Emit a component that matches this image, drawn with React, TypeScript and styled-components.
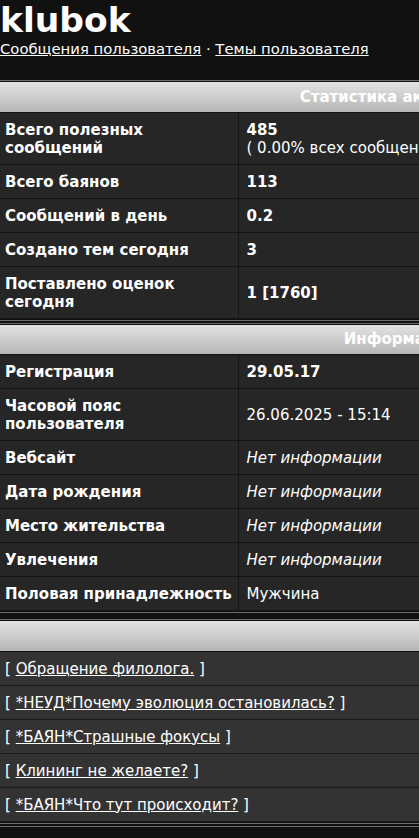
import React from "react";
import styled, { createGlobalStyle } from "styled-components";

const GlobalStyle = createGlobalStyle`
  html, body {
    margin: 0;
    padding: 0;
    background: #111111;
    overflow-x: hidden;
  }
  body {
    font-family: "DejaVu Sans", Verdana, sans-serif;
    color: #ffffff;
  }
`;

const Page = styled.div`
  width: 800px;
  background: #111111;
`;

const Top = styled.header`
  padding: 0 0 22px 0;
`;

const Title = styled.h1`
  margin: 0;
  font-size: 34.5px;
  line-height: 40px;
  font-weight: bold;
  color: #ffffff;
`;

const NavLine = styled.div`
  font-size: 14.8px;
  line-height: 18px;
  color: #ffffff;
`;

const NavLink = styled.a`
  color: #ffffff;
  text-decoration: underline;
`;

const Section = styled.section<{ $gap?: number }>`
  margin-top: ${(p) => p.$gap ?? 0}px;
  border-top: 1px solid #6c6c6c;
  border-bottom: 1px solid #6c6c6c;
  padding: 1px 0;
  background: #111111;
`;

const Table = styled.table`
  width: 100%;
  border-collapse: collapse;
  table-layout: fixed;
`;

const HeadCell = styled.th`
  height: 30px;
  padding: 0;
  box-sizing: border-box;
  background: linear-gradient(#e3e3e3, #b6b6b6);
  color: #ffffff;
  font-size: 15px;
  font-weight: bold;
  text-align: center;
  border-bottom: 1px solid #111111;
  vertical-align: middle;
`;

const Row = styled.tr<{ $light?: boolean }>`
  background: ${(p) => (p.$light ? "#333333" : "#262626")};
`;

const LabelCell = styled.td`
  padding: 8px 4px 7px 5px;
  font-size: 15px;
  line-height: 18px;
  font-weight: bold;
  border-bottom: 1px solid #141414;
  vertical-align: middle;
  white-space: normal;
`;

const ValueCell = styled.td<{ $bold?: boolean; $italic?: boolean }>`
  padding: 8px 8px 7px 8px;
  font-size: 15px;
  line-height: 18px;
  font-weight: ${(p) => (p.$bold ? "bold" : "normal")};
  font-style: ${(p) => (p.$italic ? "italic" : "normal")};
  border-bottom: 1px solid #141414;
  border-left: 1px solid #141414;
  vertical-align: middle;
  white-space: nowrap;
`;

const Sub = styled.span`
  display: block;
  font-weight: normal;
`;

const TopicCell = styled.td`
  padding: 8px 5px 7px 5px;
  font-size: 15px;
  line-height: 18px;
  border-bottom: 1px solid #1a1a1a;
  white-space: nowrap;
`;

const TopicLink = styled.a`
  color: #ffffff;
  text-decoration: underline;
`;

const Tail = styled.div`
  margin-top: 2px;
  border-top: 1px solid #6c6c6c;
  height: 14px;
  background: #111111;
`;

type Item = { label: string; value: React.ReactNode; bold?: boolean; italic?: boolean };

const stats: Item[] = [
  {
    label: "Всего полезных сообщений",
    value: (
      <>
        485
        <Sub>( 0.00% всех сообщений )</Sub>
      </>
    ),
    bold: true,
  },
  { label: "Всего баянов", value: "113", bold: true },
  { label: "Сообщений в день", value: "0.2", bold: true },
  { label: "Создано тем сегодня", value: "3", bold: true },
  { label: "Поставлено оценок сегодня", value: "1 [1760]", bold: true },
];

const info: Item[] = [
  { label: "Регистрация", value: "29.05.17", bold: true },
  { label: "Часовой пояс пользователя", value: "26.06.2025 - 15:14" },
  { label: "Вебсайт", value: "Нет информации", italic: true },
  { label: "Дата рождения", value: "Нет информации", italic: true },
  { label: "Место жительства", value: "Нет информации", italic: true },
  { label: "Увлечения", value: "Нет информации", italic: true },
  { label: "Половая принадлежность", value: "Мужчина" },
];

const topics = [
  "Обращение филолога.",
  "*НЕУД*Почему эволюция остановилась?",
  "*БАЯН*Страшные фокусы",
  "Клининг не желаете?",
  "*БАЯН*Что тут происходит?",
];

function InfoTable({ title, items }: { title: string; items: Item[] }) {
  return (
    <Table>
      <colgroup>
        <col style={{ width: 238 }} />
        <col />
      </colgroup>
      <thead>
        <tr>
          <HeadCell colSpan={2}>{title}</HeadCell>
        </tr>
      </thead>
      <tbody>
        {items.map((it) => (
          <Row key={it.label}>
            <LabelCell>{it.label}</LabelCell>
            <ValueCell $bold={it.bold} $italic={it.italic}>
              {it.value}
            </ValueCell>
          </Row>
        ))}
      </tbody>
    </Table>
  );
}

export default function App() {
  return (
    <Page>
      <GlobalStyle />
      <Top>
        <Title>klubok</Title>
        <NavLine>
          <NavLink href="#">Сообщения пользователя</NavLink> ·{" "}
          <NavLink href="#">Темы пользователя</NavLink>
        </NavLine>
      </Top>
      <Section>
        <InfoTable title="Статистика активности" items={stats} />
      </Section>
      <Section $gap={2}>
        <InfoTable title="Информация" items={info} />
      </Section>
      <Section $gap={6}>
        <Table>
          <thead>
            <tr>
              <HeadCell>&nbsp;</HeadCell>
            </tr>
          </thead>
          <tbody>
            {topics.map((t) => (
              <Row key={t} $light>
                <TopicCell>
                  [ <TopicLink href="#">{t}</TopicLink> ]
                </TopicCell>
              </Row>
            ))}
          </tbody>
        </Table>
      </Section>
      <Tail />
    </Page>
  );
}
